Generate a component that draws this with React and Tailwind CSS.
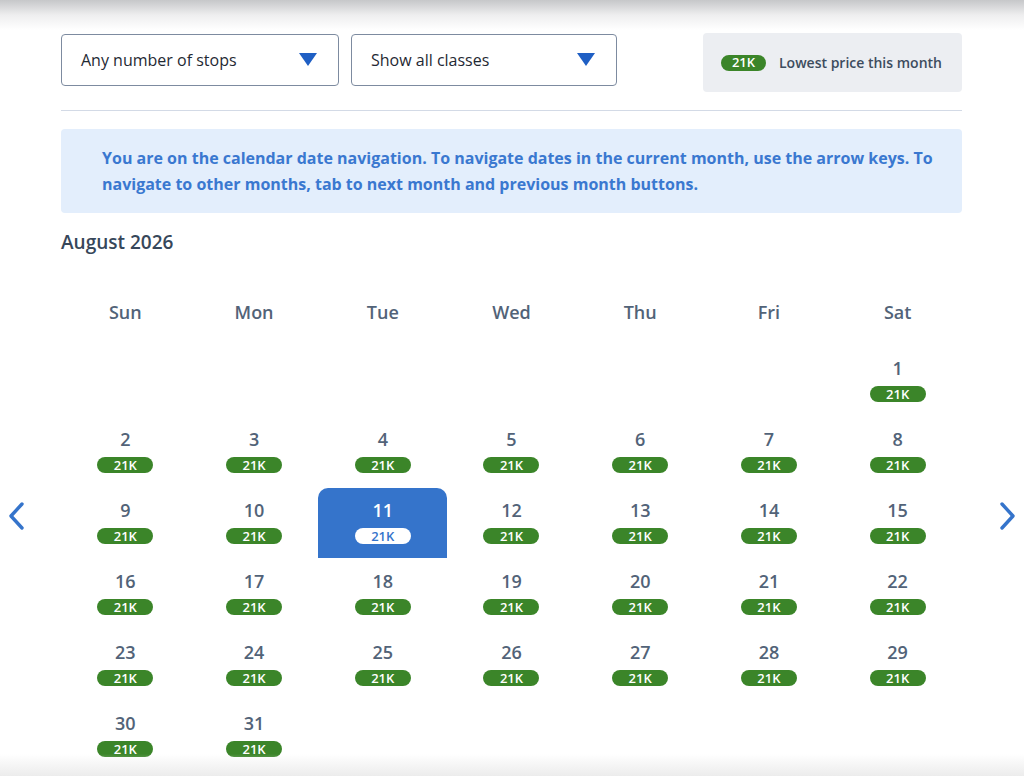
import { useState } from "react";

const WEEKDAYS = ["Sun", "Mon", "Tue", "Wed", "Thu", "Fri", "Sat"];

// August 2026 starts on a Saturday
const buildCells = () => {
    const cells = Array(6).fill(null);
    for (let d = 1; d <= 31; d++) cells.push(d);
    while (cells.length % 7 !== 0) cells.push(null);
    return cells;
};

const Caret = () => (
    <svg width="18" height="14" viewBox="0 0 18 14" className="shrink-0">
        <polygon points="0,0 18,0 9,13" fill="#1f5fc4" />
    </svg>
);

const Dropdown = ({ label, width }) => (
    <button className={`${width} h-[52px] flex items-center justify-between pl-[19px] pr-[21px] border border-[#7d8ba0] rounded-[4px] bg-white text-[16px] text-[#1f2933]`}>
        <span>{label}</span>
        <Caret />
    </button>
);

const Pill = ({ selected }) => (
    <span className={`w-[56px] h-[16px] rounded-full flex items-center justify-center text-[13px] font-semibold leading-none ${selected ? "bg-white text-[#3574cb]" : "bg-[#3b8529] text-white"}`}>
        21K
    </span>
);

const Chevron = ({ dir }) => (
    <svg width="18" height="28" viewBox="0 0 18 28" fill="none" className="block">
        <path
            d={dir === "left" ? "M15 2 L4 14 L15 26" : "M3 2 L14 14 L3 26"}
            stroke="#3574cb"
            strokeWidth="3.4"
            strokeLinecap="round"
            strokeLinejoin="round"
        />
    </svg>
);

const App = () => {
    const [selected, setSelected] = useState(11);
    const cells = buildCells();

    return (
        <div className="relative w-full h-[776px] bg-white overflow-hidden font-['Open_Sans',sans-serif]">
            <div className="absolute top-0 left-0 right-0 h-[30px] bg-gradient-to-b from-[#c6c7c9] via-[#eeeeef] to-white/0 pointer-events-none" />
            <div className="absolute bottom-0 left-0 right-0 h-[22px] bg-gradient-to-b from-white/0 to-[#ececec] pointer-events-none" />

            <div className="mx-[61px] mr-[62px] pt-[33px]">
                <div className="flex items-start">
                    <div className="flex gap-3 mt-px">
                        <Dropdown label="Any number of stops" width="w-[278px]" />
                        <Dropdown label="Show all classes" width="w-[266px]" />
                    </div>
                    <div className="ml-auto w-[259px] h-[59px] bg-[#eceef2] rounded-[4px] flex items-center pl-[18px] gap-[13px]">
                        <span className="w-[45px] h-[16px] rounded-full bg-[#3b8529] text-white text-[13px] font-semibold leading-none flex items-center justify-center">21K</span>
                        <span className="text-[14px] font-semibold text-[#3d4c5e]">Lowest price this month</span>
                    </div>
                </div>

                <div className="h-px bg-[#d3dae6] mt-[18px]" />

                <div className="mt-[18px] bg-[#e3eefc] rounded-[4px] pl-[41px] pr-6 py-[16px]">
                    <p className="text-[16px] leading-[26px] font-bold text-[#3a78d0]">
                        You are on the calendar date navigation. To navigate dates in the current month, use the arrow keys. To navigate to other months, tab to next month and previous month buttons.
                    </p>
                </div>
            </div>

            <div className="flex items-start mt-[16px]">
                <div className="w-[61px] flex justify-center pt-[273px] pr-[30px]">
                    <button aria-label="Previous month"><Chevron dir="left" /></button>
                </div>

                <div className="flex-1">
                    <h2 className="text-[19px] leading-[26px] font-semibold text-[#37475a]">August 2026</h2>

                    <div className="grid grid-cols-7 mt-[44px]">
                        {WEEKDAYS.map((d) => (
                            <div key={d} className="h-[26px] flex items-center justify-center text-[18px] font-semibold text-[#526378]">{d}</div>
                        ))}
                    </div>

                    <div className="grid grid-cols-7 gap-y-px mt-[21px]">
                        {cells.map((d, i) => {
                            if (!d) return <div key={i} className="h-[70px]" />;
                            const isSel = d === selected;
                            return (
                                <button
                                    key={i}
                                    onClick={() => setSelected(d)}
                                    className={`h-[70px] flex flex-col items-center pt-[10px] ${isSel ? "bg-[#3574cb] rounded-t-[10px]" : ""}`}
                                >
                                    <span className={`text-[18px] leading-[24px] font-semibold ${isSel ? "text-white" : "text-[#526378]"}`}>{d}</span>
                                    <span className="mt-[6px]"><Pill selected={isSel} /></span>
                                </button>
                            );
                        })}
                    </div>
                </div>

                <div className="w-[62px] flex justify-center pt-[273px] pl-[30px]">
                    <button aria-label="Next month"><Chevron dir="right" /></button>
                </div>
            </div>
        </div>
    );
};

export default App;
